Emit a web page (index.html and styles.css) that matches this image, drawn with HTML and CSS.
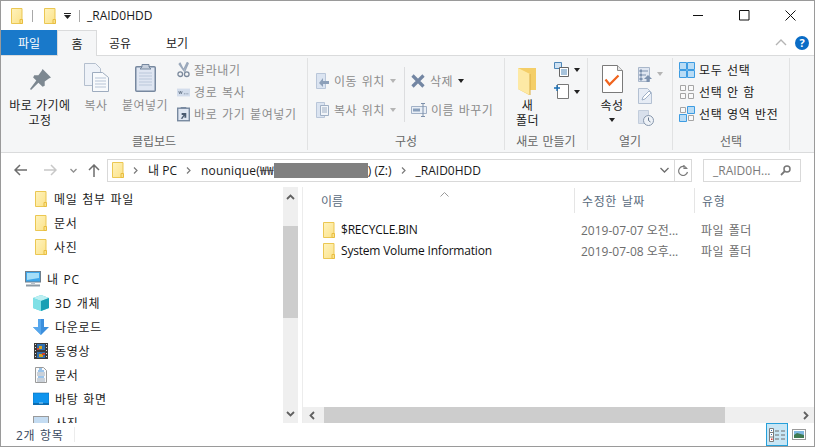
FILE: index.html
```html
<!DOCTYPE html>
<html lang="ko">
<head>
<meta charset="utf-8">
<title>_RAID0HDD</title>
<link rel="stylesheet" href="styles.css">
</head>
<body>
<svg class="defs" width="0" height="0">
  <defs>
    <linearGradient id="fg" x1="0" y1="0" x2="1" y2="1"><stop offset="0" stop-color="#fff3bd"/><stop offset="1" stop-color="#fbe28a"/></linearGradient>
    <symbol id="folder" viewBox="0 0 12 16">
      <path d="M.5.5h10.5v15H.5z" fill="url(#fg)" stroke="#ebc752"/>
      <path d="M9 15.5v-4h2.5v4z" fill="#fbe28a" stroke="#e8bd40"/>
    </symbol>
    <symbol id="sel" viewBox="0 0 16 16">
      <path d="M.5.5h7v7h-7zM8.5.5h7v7h-7zM.5 8.5h7v7h-7zM8.5 8.5h7v7h-7z" fill="#b9dcf5" stroke="#3d9ce2"/>
    </symbol>
  </defs>
</svg>
<div class="window">
  <header class="titlebar">
    <svg class="qa-folder" width="12" height="16"><use href="#folder"/></svg>
    <span class="qa-sep"></span>
    <svg class="qa-folder" width="12" height="16"><use href="#folder"/></svg>
    <svg class="qa-drop" width="7" height="6" viewBox="0 0 7 6"><path d="M0 0h7v1H0zM0 2h7L3.5 6z" fill="#222"/></svg>
    <span class="qa-sep"></span>
    <span class="title">_RAID0HDD</span>
    <div class="winbtns">
      <svg width="11" height="11" viewBox="0 0 11 11"><path d="M0 5.5h10" stroke="#111"/></svg>
      <svg width="11" height="11" viewBox="0 0 11 11"><path d="M.5.5h9.5v9.5H.5z" fill="none" stroke="#111"/></svg>
      <svg width="11" height="11" viewBox="0 0 11 11"><path d="M.5.5l10 10M10.5.5l-10 10" stroke="#111"/></svg>
    </div>
  </header>

  <nav class="tabs">
    <span class="tab tab-file">파일</span>
    <span class="tab tab-home">홈</span>
    <span class="tab tab-share">공유</span>
    <span class="tab tab-view">보기</span>
    <span class="tabs-right">
      <svg width="12" height="7" viewBox="0 0 12 7"><path d="M1 6l5-5 5 5" fill="none" stroke="#b4b4b4" stroke-width="1.4"/></svg>
      <svg width="14" height="14" viewBox="0 0 14 14"><circle cx="7" cy="7" r="7" fill="#0a6cc6"/><text x="7" y="11" class="help-q">?</text></svg>
    </span>
  </nav>

  <section class="ribbon">
    <div class="group g-clip">
      <div class="g-body">
        <div class="big b-pin">
          <div class="big-icon">
            <svg width="21" height="21" viewBox="0 0 20 20"><path d="M12 0l8 8-2 1-4 3v4l-2 1-4-4-7 7-1-1 6-8-3-3 1-2h4l3-4z" fill="#7d8891"/></svg>
          </div>
          <span>바로 가기에</span><span>고정</span>
        </div>
        <div class="big b-copy dim">
          <div class="big-icon">
            <svg width="25" height="29" viewBox="0 0 25 29"><path d="M.5.5h11l5 5v17H.5z" fill="#eef2f8" stroke="#b4bfce"/><path d="M8.5 9.5h10l6 5v14h-16z" fill="#f8fafc" stroke="#9eacbf"/><path d="M11 15h11M11 18h11M11 21h11M11 24h11" stroke="#b7c4d6"/></svg>
          </div>
          <span>복사</span>
        </div>
        <div class="big b-paste dim">
          <div class="big-icon">
            <svg width="21" height="29" viewBox="0 0 21 29"><rect x=".75" y="3.75" width="19.5" height="24.5" rx="1" fill="#dfe6f2" stroke="#77889f" stroke-width="1.5"/><path d="M7 4V1.5h7V4l2 2H5z" fill="#c6cfdc" stroke="#77889f"/><path d="M4 10h13M4 13h13M4 16h13M4 19h13M4 22h13" stroke="#bac7da"/></svg>
          </div>
          <span>붙여넣기</span>
        </div>
        <div class="smalls dim">
          <div class="small-row">
            <svg class="s-ic" width="14" height="16" viewBox="0 0 14 16"><path d="M3 0l4 8 4-8 1 1-4 9M7 8L2 1" fill="none" stroke="#9aa8bb" stroke-width="1.5"/><circle cx="3.5" cy="12.5" r="2.5" fill="none" stroke="#7b899c" stroke-width="1.4"/><circle cx="10.5" cy="12.5" r="2.5" fill="none" stroke="#7b899c" stroke-width="1.4"/></svg>
            <span>잘라내기</span>
          </div>
          <div class="small-row">
            <svg class="s-ic" width="15" height="9" viewBox="0 0 15 9"><rect width="15" height="9" fill="#d3ddec"/><path d="M2 3l1 3 1-3 1 3 1-3M8 6h1M10 6h1M12 6h1" stroke="#56657a" fill="none" stroke-width=".8"/></svg>
            <span>경로 복사</span>
          </div>
          <div class="small-row">
            <svg class="s-ic" width="14" height="16" viewBox="0 0 14 16"><rect x=".75" y="1.75" width="12.5" height="13.5" fill="#dfe6f2" stroke="#77889f" stroke-width="1.5"/><path d="M4 2V.5h6V2z" fill="#77889f"/><path d="M4 13l3-4H5V7h5v5H8V10l-2 3z" fill="#4a5a70"/></svg>
            <span>바로 가기 붙여넣기</span>
          </div>
        </div>
      </div>
      <div class="g-label">클립보드</div>
    </div>

    <div class="group g-org">
      <div class="g-body">
        <div class="org-col dim">
          <div class="org-row">
            <svg class="o-ic" width="13" height="16" viewBox="0 0 13 16"><path d="M.5.5h9v15h-9z" fill="#dbe4f1" stroke="#b9c6d9"/><path d="M13 8H7V5l-4 5 4 4v-3h6z" fill="#8da0b9"/></svg>
            <span>이동 위치</span><i class="caret c-dim"></i>
          </div>
          <div class="org-row">
            <svg class="o-ic" width="13" height="16" viewBox="0 0 13 16"><path d="M.5.5h8v15h-8z" fill="#dbe4f1" stroke="#b9c6d9"/><path d="M4.5 3.5h8v10h-8z" fill="#f2f5f9" stroke="#9fafc4"/><path d="M6 6h5M6 8h5M6 10h5" stroke="#9fafc4"/></svg>
            <span>복사 위치</span><i class="caret c-dim"></i>
          </div>
        </div>
        <div class="org-div"></div>
        <div class="org-col col2 dim">
          <div class="org-row">
            <svg class="x-ic" width="14" height="14" viewBox="0 0 14 14"><path d="M1.5 1.5l11 11M12.5 1.5l-11 11" stroke="#7386a3" stroke-width="3.2"/></svg>
            <span>삭제</span><i class="caret c-dark"></i>
          </div>
          <div class="org-row">
            <svg class="r-ic" width="16" height="14" viewBox="0 0 16 14"><path d="M.5 3.5h15v7H.5z" fill="#e8eef6" stroke="#a2b1c6"/><path d="M2 5.5h7v3H2z" fill="#8aa0bc"/><path d="M10 .5h4M12 .5v13M10 13.5h4" stroke="#7d90ab" fill="none"/></svg>
            <span>이름 바꾸기</span>
          </div>
        </div>
      </div>
      <div class="g-label">구성</div>
    </div>

    <div class="group g-new">
      <div class="g-body">
        <div class="big b-new">
          <div class="big-icon">
            <svg width="19" height="28" viewBox="0 0 19 28"><path d="M0 0h18v22h-7v5L0 21z" fill="#f4ce68"/><path d="M0 0l12 6v21L0 21z" fill="#fde9a5"/><path d="M12 6v21" stroke="#d9ac45"/></svg>
          </div>
          <span>새</span><span>폴더</span>
        </div>
        <div class="new-smalls">
          <div class="new-row">
            <svg width="15" height="15" viewBox="0 0 15 15"><path d="M.5.5h7v6h-7z" fill="#cfe2f3" stroke="#4e87b8"/><path d="M5.5 5.5h9v9h-9z" fill="#fff" stroke="#666"/><path d="M7 8h6M7 10h6M7 12h6" stroke="#4e87b8"/></svg>
            <i class="caret c-dark"></i>
          </div>
          <div class="new-row">
            <svg width="15" height="15" viewBox="0 0 15 15"><path d="M3.5.5h11v14h-11z" fill="#fff" stroke="#777"/><path d="M0 4h6M3 1v6" stroke="#1a6fb5" stroke-width="1.3"/></svg>
            <i class="caret c-dark"></i>
          </div>
        </div>
      </div>
      <div class="g-label">새로 만들기</div>
    </div>

    <div class="group g-open">
      <div class="g-body">
        <div class="big b-prop">
          <div class="big-icon">
            <svg width="21" height="28" viewBox="0 0 21 28"><path d="M.5.5h15l5 5v22H.5z" fill="#fff" stroke="#7a7a7a"/><path d="M15.5.5v5h5" fill="#e6e6e6" stroke="#8a8a8a"/><path d="M3.5 14.5l4 5 9-9" fill="none" stroke="#f0641e" stroke-width="2.2"/></svg>
          </div>
          <span>속성</span>
          <i class="caret c-dark prop-caret"></i>
        </div>
        <div class="open-smalls dim">
          <div class="open-row">
            <svg width="14" height="15" viewBox="0 0 14 15"><path d="M.5.5h11v14H.5z" fill="#dfe6f1" stroke="#a9b7ca"/><path d="M2 3h2v2H2zM2 7h2v2H2zM2 11h2v2H2zM5 4h5M5 8h3" fill="#7c91ae" stroke="#7c91ae"/><path d="M10 8l4 4h-2.500v3h-3v-3H6z" fill="#7c91ae"/></svg>
            <i class="caret c-dim"></i>
          </div>
          <div class="open-row">
            <svg width="14" height="16" viewBox="0 0 14 16"><path d="M.5.5h9l4 4v11H.5z" fill="#e6ecf5" stroke="#b3c0d2"/><path d="M4 12l1-3 6-6 2 2-6 6z" fill="#fff" stroke="#9fb0c6"/></svg>
          </div>
          <div class="open-row">
            <svg width="16" height="16" viewBox="0 0 16 16"><path d="M.5.5h10v13H.5z" fill="#d8e0ec" stroke="#c2cddc"/><circle cx="10.500" cy="10.500" r="5" fill="#eef2f7" stroke="#8797ac"/><path d="M10.500 7.500v3l2 1.500" fill="none" stroke="#66778e"/></svg>
          </div>
        </div>
      </div>
      <div class="g-label">열기</div>
    </div>

    <div class="group g-sel">
      <div class="g-body sel-col">
        <div class="small-row">
          <svg class="s-ic" width="16" height="16"><use href="#sel"/></svg>
          <span>모두 선택</span>
        </div>
        <div class="small-row">
          <svg class="s-ic" width="16" height="16" viewBox="0 0 16 16"><path d="M1.500 1.500h5v5h-5zM9.500 1.500h5v5h-5zM1.500 9.500h5v5h-5zM9.500 9.500h5v5h-5z" fill="#fafafa" stroke="#a5a5a5"/></svg>
          <span>선택 안 함</span>
        </div>
        <div class="small-row">
          <svg class="s-ic" width="16" height="16" viewBox="0 0 16 16"><path d="M1.500 1.500h5v5h-5zM9.500 9.500h5v5h-5z" fill="#fafafa" stroke="#a5a5a5"/><path d="M8.500.5h7v7h-7zM.5 8.500h7v7h-7z" fill="#b9dcf5" stroke="#3d9ce2"/></svg>
          <span>선택 영역 반전</span>
        </div>
      </div>
      <div class="g-label">선택</div>
    </div>
  </section>

  <div class="navbar">
    <svg class="n-back" width="13" height="12" viewBox="0 0 13 12"><path d="M6 1L1 6l5 5M1 6h12" fill="none" stroke="#6d6d6d" stroke-width="1.500"/></svg>
    <svg class="n-fwd" width="13" height="12" viewBox="0 0 13 12"><path d="M7 1l5 5-5 5M12 6H0" fill="none" stroke="#c8c8c8" stroke-width="1.500"/></svg>
    <svg class="n-down" width="7" height="5" viewBox="0 0 7 5"><path d="M.5 1l3 3 3-3" fill="none" stroke="#8f8f8f" stroke-width="1.300"/></svg>
    <svg class="n-up" width="12" height="13" viewBox="0 0 12 13"><path d="M1 6l5-5 5 5M6 1v12" fill="none" stroke="#6d6d6d" stroke-width="1.500"/></svg>
    <div class="address">
      <svg class="addr-folder" width="12" height="16"><use href="#folder"/></svg>
      <svg class="crumb-sep" width="5" height="7" viewBox="0 0 5 7"><path d="M1 .5l3 3-3 3" fill="none" stroke="#7a7a7a" stroke-width="1.200"/></svg>
      <span class="crumb c-pc">내 PC</span>
      <svg class="crumb-sep" width="5" height="7" viewBox="0 0 5 7"><path d="M1 .5l3 3-3 3" fill="none" stroke="#7a7a7a" stroke-width="1.200"/></svg>
      <span class="crumb c-vol">nounique(₩₩</span><span class="redact"></span><span class="crumb">) (Z:)</span>
      <svg class="crumb-sep" width="5" height="7" viewBox="0 0 5 7"><path d="M1 .5l3 3-3 3" fill="none" stroke="#7a7a7a" stroke-width="1.200"/></svg>
      <span class="crumb">_RAID0HDD</span>
      <svg class="addr-drop" width="9" height="6" viewBox="0 0 9 6"><path d="M.5 1l4 4 4-4" fill="none" stroke="#6d6d6d" stroke-width="1.300"/></svg>
      <span class="addr-refresh">
        <svg width="12" height="13" viewBox="0 0 12 13"><path d="M9.500 4A4.500 4.500 0 1 0 10.500 8M7 1v3.500h3.500" fill="none" stroke="#7a7a7a" stroke-width="1.200"/></svg>
      </span>
    </div>
    <div class="search">
      <span>_RAID0H...</span>
      <svg width="11" height="11" viewBox="0 0 11 11"><circle cx="7" cy="4" r="3" fill="none" stroke="#777" stroke-width="1.500"/><path d="M4.800 6.200L1 10" stroke="#777" stroke-width="1.800"/></svg>
    </div>
  </div>

  <main class="content">
    <aside class="sidebar">
      <ul class="tree">
        <li class="node"><svg class="nf" width="12" height="16"><use href="#folder"/></svg><span>메일 첨부 파일</span></li>
        <li class="node"><svg class="nf" width="12" height="16"><use href="#folder"/></svg><span>문서</span></li>
        <li class="node gap-after"><svg class="nf" width="12" height="16"><use href="#folder"/></svg><span>사진</span></li>
        <li class="node root">
          <svg class="pc" width="16" height="16" viewBox="0 0 16 16"><rect x=".5" y=".5" width="15" height="10.500" fill="#3ea6ea" stroke="#6f7f8c"/><path d="M2 2h12v5L2 9z" fill="#a5def8"/><path d="M6 11h4v2H6z" fill="#b8c2cb"/><path d="M1 13.500h14v2H1z" fill="#8e9aa5"/></svg>
          <span>내 PC</span>
        </li>
        <li class="node">
          <svg class="ni" width="16" height="16" viewBox="0 0 16 16"><path d="M8 0l8 3v10l-8 3-8-3V3z" fill="#4fd0dc"/><path d="M8 0l8 3-8 3-8-3z" fill="#bdeff2"/><path d="M8 6v10l8-3V3z" fill="#1a9fb4"/><path d="M0 3l8 3v10l-8-3z" fill="#7fe0e6"/></svg>
          <span>3D 개체</span>
        </li>
        <li class="node">
          <svg class="ni" width="16" height="16" viewBox="0 0 16 16"><path d="M5 0h6v8h5l-8 8-8-8h5z" fill="#3c8fdd"/><path d="M5 0h3v16L0 8h5z" fill="#57a7ec"/></svg>
          <span>다운로드</span>
        </li>
        <li class="node">
          <svg class="ni" width="16" height="16" viewBox="0 0 16 16"><rect x="1" y="0" width="14" height="16" fill="#3b3b3b"/><path d="M2 1h1v1H2zM2 4h1v1H2zM2 7h1v1H2zM2 10h1v1H2zM2 13h1v1H2zM13 1h1v1h-1zM13 4h1v1h-1zM13 7h1v1h-1zM13 10h1v1h-1zM13 13h1v1h-1z" fill="#ddd"/><rect x="4" y="1" width="8" height="6" fill="#2f6fb0"/><rect x="4" y="9" width="8" height="6" fill="#2f6fb0"/><path d="M6 3h3v3H6zM6 11h4v3H6z" fill="#d8a521"/><path d="M4 5h2v2H4zM9 10h3v2H9z" fill="#c9402e"/></svg>
          <span>동영상</span>
        </li>
        <li class="node">
          <svg class="ni" width="16" height="16" viewBox="0 0 16 16"><path d="M2.500.5h8l3 3v12h-11z" fill="#fafafa" stroke="#9a9a9a"/><path d="M4 6h8M4 8h8M4 12h8M4 14h8" stroke="#9aa8b8"/><path d="M6 2h3M5 4h6M5 10h6" stroke="#3c8fdd"/></svg>
          <span>문서</span>
        </li>
        <li class="node">
          <svg class="ni" width="16" height="16" viewBox="0 0 16 16"><rect y="2" width="16" height="11" fill="#0f94ee" stroke="#0b6cb0" stroke-width=".6"/><path d="M0 12h16v2H0z" fill="#0b6cb0"/><path d="M6 12h4" stroke="#9fd4f7"/></svg>
          <span>바탕 화면</span>
        </li>
        <li class="node">
          <svg class="ni" width="16" height="16" viewBox="0 0 16 16"><rect x=".5" y="1.500" width="15" height="13" fill="#c4dcf2" stroke="#9a9a9a"/></svg>
          <span>사진</span>
        </li>
      </ul>
      <div class="vscroll">
        <svg width="9" height="6" viewBox="0 0 9 6"><path d="M1 5l3.500-3.500L8 5" fill="none" stroke="#606060" stroke-width="1.800"/></svg>
        <div class="track"><div class="thumb"></div></div>
        <svg width="9" height="6" viewBox="0 0 9 6"><path d="M1 1l3.500 3.500L8 1" fill="none" stroke="#606060" stroke-width="1.800"/></svg>
      </div>
    </aside>
    <section class="pane">
      <div class="list">
        <div class="list-head">
          <span class="col-name">이름<svg class="sort" width="9" height="5" viewBox="0 0 9 5"><path d="M.5 4.500l4-4 4 4" fill="none" stroke="#9a9a9a"/></svg></span>
          <span class="col-date">수정한 날짜</span>
          <span class="col-type">유형</span>
        </div>
        <div class="file">
          <span class="col-name"><svg width="12" height="16"><use href="#folder"/></svg><b>$RECYCLE.BIN</b></span>
          <span class="col-date">2019-07-07 오전...</span>
          <span class="col-type">파일 폴더</span>
        </div>
        <div class="file">
          <span class="col-name"><svg width="12" height="16"><use href="#folder"/></svg><b>System Volume Information</b></span>
          <span class="col-date">2019-07-08 오후...</span>
          <span class="col-type">파일 폴더</span>
        </div>
      </div>
      <div class="hscroll">
        <svg width="6" height="9" viewBox="0 0 6 9"><path d="M5 1L1.500 4.500 5 8" fill="none" stroke="#606060" stroke-width="1.800"/></svg>
        <div class="htrack"><div class="hthumb"></div></div>
        <svg width="6" height="9" viewBox="0 0 6 9"><path d="M1 1l3.500 3.500L1 8" fill="none" stroke="#606060" stroke-width="1.800"/></svg>
      </div>
    </section>
  </main>

  <footer class="status">
    <span class="count">2개 항목</span>
    <span class="status-sep"></span>
    <div class="views">
      <span class="view on">
        <svg width="16" height="14" viewBox="0 0 16 14"><path d="M.500.500h4v13h-4z" fill="#fff" stroke="#7b7b7b"/><path d="M.500 4.500h4M.500 9h4" stroke="#7b7b7b"/><path d="M2 2h1v1H2zM2 6h1v1H2z" fill="#3c6fb0"/><path d="M2 10.500h1.500v1.500H2z" fill="#d33"/><path d="M6 3h4M12 3h4M6 7h4M12 7h4M6 11h4M12 11h4" stroke="#6d6d6d"/></svg>
      </span>
      <span class="view v-pic">
        <svg width="14" height="11" viewBox="0 0 14 11"><rect x=".5" y=".5" width="13" height="10" fill="#fff" stroke="#9a9a9a"/><rect x="2" y="2" width="10" height="7" fill="#7fb8e0"/><path d="M2 6l3-2 7 2v3H2z" fill="#3f7a52"/></svg>
      </span>
    </div>
  </footer>
</div>
</body>
</html>
```

FILE: styles.css
```css
* { box-sizing: border-box; }
html, body { margin: 0; padding: 0; }
body {
  width: 815px;
  height: 447px;
  overflow: hidden;
  background: #fff;
  font-family: "Open Sans", "Noto Sans CJK KR", sans-serif;
  font-size: 12px;
  color: #1a1a1a;
}
.defs { position: absolute; }
.window {
  width: 815px;
  height: 447px;
  border: 1px solid #9a9a9a;
  display: flex;
  flex-direction: column;
  overflow: hidden;
}
svg { display: block; flex: none; }

/* title bar */
.titlebar { height: 29px; flex: none; display: flex; align-items: center; padding-left: 10px; }
.qa-sep { width: 1px; height: 12px; background: #a8a8a8; margin: 0 11px 0 9px; }
.qa-drop { margin-left: 8px; margin-right: -3px; }
.qa-drop + .qa-sep { margin-left: 11px; margin-right: 7px; }
.title { font-size: 12px; }
.winbtns { margin-left: auto; display: flex; gap: 35px; padding-right: 18px; }

/* tabs */
.tabs { height: 25px; flex: none; display: flex; align-items: stretch; }
.tab { display: flex; align-items: center; justify-content: center; height: 25px; font-size: 12px; }
.tab-file { width: 56px; background: #1979ca; color: #fff; }
.tab-home { width: 40px; background: #f5f6f7; border: 1px solid #dadbdc; border-bottom: 0; position: relative; z-index: 1; height: 26px; }
.tab-share { width: 46px; }
.tab-view { width: 68px; }
.tabs-right { margin-left: auto; display: flex; align-items: center; gap: 8px; padding-right: 5px; }
.help-q { font: bold 11px "Open Sans", sans-serif; fill: #fff; text-anchor: middle; }

/* ribbon */
.ribbon {
  height: 98px;
  flex: none;
  display: flex;
  background: #f5f6f7;
  border-top: 1px solid #dadbdc;
  border-bottom: 1px solid #dadbdc;
}
.group { display: flex; flex-direction: column; border-right: 1px solid #e1e2e3; margin: 2px 0; }
.g-body { height: 74px; display: flex; flex: none; margin-top: -2px; }
.g-label { text-align: center; line-height: 18px; color: #666; margin-top: 3px; word-spacing: 1px; }
.g-clip { width: 307px; }
.g-org { width: 197px; }
.g-new { width: 83px; }
.g-open { width: 85px; }
.g-sel { width: 117px; }
.dim { color: #8c8c8c; }
.big { display: flex; flex-direction: column; align-items: center; line-height: 15px; white-space: nowrap; letter-spacing: .5px; }
.big-icon { height: 42px; display: flex; align-items: center; justify-content: center; }
.b-pin { width: 78px; }
.b-pin .big-icon { padding-top: 5px; }
.b-copy { width: 34px; }
.b-paste { width: 60px; margin-left: 2px; }
.small-row { height: 22px; display: flex; align-items: center; letter-spacing: .6px; word-spacing: 1px; white-space: nowrap; }
.smalls, .sel-col { padding-top: 3px; display: flex; flex-direction: column; }
.s-ic { margin-right: 4px; }
.smalls .s-ic { margin-left: 2px; margin-right: 4px; }
.smalls .small-row { width: 130px; }
.smalls .small-row svg { width: 13px; }
.caret { display: block; width: 0; height: 0; border: 3px solid transparent; border-top: 4px solid #333; border-bottom: 0; margin-left: 5px; }
.c-dim { border-top-color: #b5b5b5; }
.c-dark { border-top-color: #222; }

.g-org .g-body { padding-top: 10px; padding-left: 8px; }
.org-col { width: 88px; display: flex; flex-direction: column; }
.org-row { height: 29px; display: flex; align-items: center; letter-spacing: .5px; word-spacing: 1px; white-space: nowrap; }
.o-ic { margin-right: 5px; }
.org-div { width: 1px; height: 55px; background: #dcdddf; margin-top: 1px; }
.col2 { margin-left: 6px; }
.x-ic { margin-right: 5px; }
.r-ic { margin-right: 4px; }

.b-new { width: 45px; }
.new-smalls { display: flex; flex-direction: column; gap: 7px; padding-top: 6px; margin-left: 4px; }
.new-row { display: flex; align-items: center; height: 15px; }
.b-new .big-icon { padding-top: 9px; }
.b-prop { width: 48px; }
.b-prop .big-icon { padding-top: 4px; }
.prop-caret { margin: 5px 0 0; }
.open-smalls { display: flex; flex-direction: column; margin-left: 2px; padding-top: 10px; gap: 6px; }
.open-row { display: flex; align-items: center; min-height: 16px; }
.g-sel .g-body { padding-left: 6px; }
.g-sel .s-ic { margin-right: 4px; }

/* nav */
.navbar { height: 34px; flex: none; display: flex; align-items: center; }
.n-back { margin-left: 13px; }
.n-fwd { margin-left: 17px; }
.n-down { margin-left: 13px; }
.n-up { margin-left: 11px; }
.address {
  width: 585px; height: 23px; margin-left: 7px;
  border: 1px solid #d9d9d9;
  display: flex; align-items: center; padding-left: 4px;
  white-space: nowrap;
}
.crumb-sep { margin: 0 10px 0 9px; }
.c-vol { letter-spacing: .2px; }
.redact { width: 94px; height: 15px; background: #808080; }
.addr-drop { margin-left: auto; margin-right: 5px; }
.addr-refresh { width: 17px; height: 21px; border-left: 1px solid #d9d9d9; display: flex; align-items: center; justify-content: center; }
.search {
  width: 98px; height: 23px; margin-left: 11px;
  border: 1px solid #d9d9d9; color: #7a7a7a;
  display: flex; align-items: center; justify-content: space-between; padding: 0 9px;
  white-space: nowrap;
}

/* content */
.content { flex: 1; min-height: 0; display: flex; }
.sidebar { width: 302px; flex: none; display: flex; border-right: 1px solid #ececec; }
.tree { list-style: none; margin: 0; padding: 0; width: 282px; overflow: hidden; flex: none; }
.node { height: 24px; display: flex; align-items: center; padding-left: 34px; white-space: nowrap; letter-spacing: .7px; word-spacing: 1px; }
.nf { margin-right: 7px; }
.ni { margin-right: 6px; margin-left: -2px; }
.gap-after { margin-bottom: 8px; }
.root { padding-left: 24px; }
.pc { margin-right: 6px; }
.vscroll { width: 15px; flex: none; background: #efefef; display: flex; flex-direction: column; align-items: center; justify-content: space-between; padding: 7px 0 6px; }
.track { width: 15px; flex: 1; padding-top: 26px; }
.thumb { height: 92px; background: #cdcdcd; }

.pane { flex: 1; min-width: 0; display: flex; flex-direction: column; }
.list { flex: 1; min-height: 0; }
.list-head, .file { display: flex; }
.list-head { height: 26px; padding-top: 1px; align-items: center; color: #5a6b7d; margin-bottom: 6px; }
.col-name { width: 271px; padding-left: 18px; display: flex; align-items: center; position: relative; flex: none; }
.col-date { width: 120px; padding-left: 7px; flex: none; height: 25px; display: flex; align-items: center; white-space: nowrap; }
.col-type { padding-left: 7px; flex: none; height: 25px; display: flex; align-items: center; white-space: nowrap; }
.list-head .col-date, .list-head .col-type { border-left: 1px solid #e5e5e5; letter-spacing: .6px; word-spacing: 1px; }
.sort { position: absolute; left: 137px; top: 0; }
.file { height: 21px; align-items: center; }
.file .col-name { padding-left: 20px; }
.file .col-name b { font-weight: 400; margin-left: 6px; color: #111; letter-spacing: -.2px; }
.file .col-date, .file .col-type { color: #6d6d6d; height: 21px; }
.file .col-type { letter-spacing: .5px; word-spacing: 1px; }
.hscroll { height: 16px; flex: none; background: #efefef; display: flex; align-items: center; padding: 0 5px 0 6px; }
.htrack { flex: 1; height: 16px; padding: 0 78px 0 9px; }
.hthumb { height: 16px; background: #cdcdcd; }

/* status */
.status { height: 23px; flex: none; display: flex; align-items: center; padding-left: 15px; color: #3a4a60; letter-spacing: .7px; word-spacing: 1px; }
.status-sep { width: 1px; height: 15px; background: #ececec; margin-left: 10px; }
.views { margin-left: auto; display: flex; align-items: center; gap: 4px; padding-right: 8px; }
.view { height: 23px; display: flex; align-items: center; justify-content: center; width: 22px; }
.v-pic { width: 14px; }
.view.on { background: #c8e6f5; border: 1px solid #26a0da; }
```
